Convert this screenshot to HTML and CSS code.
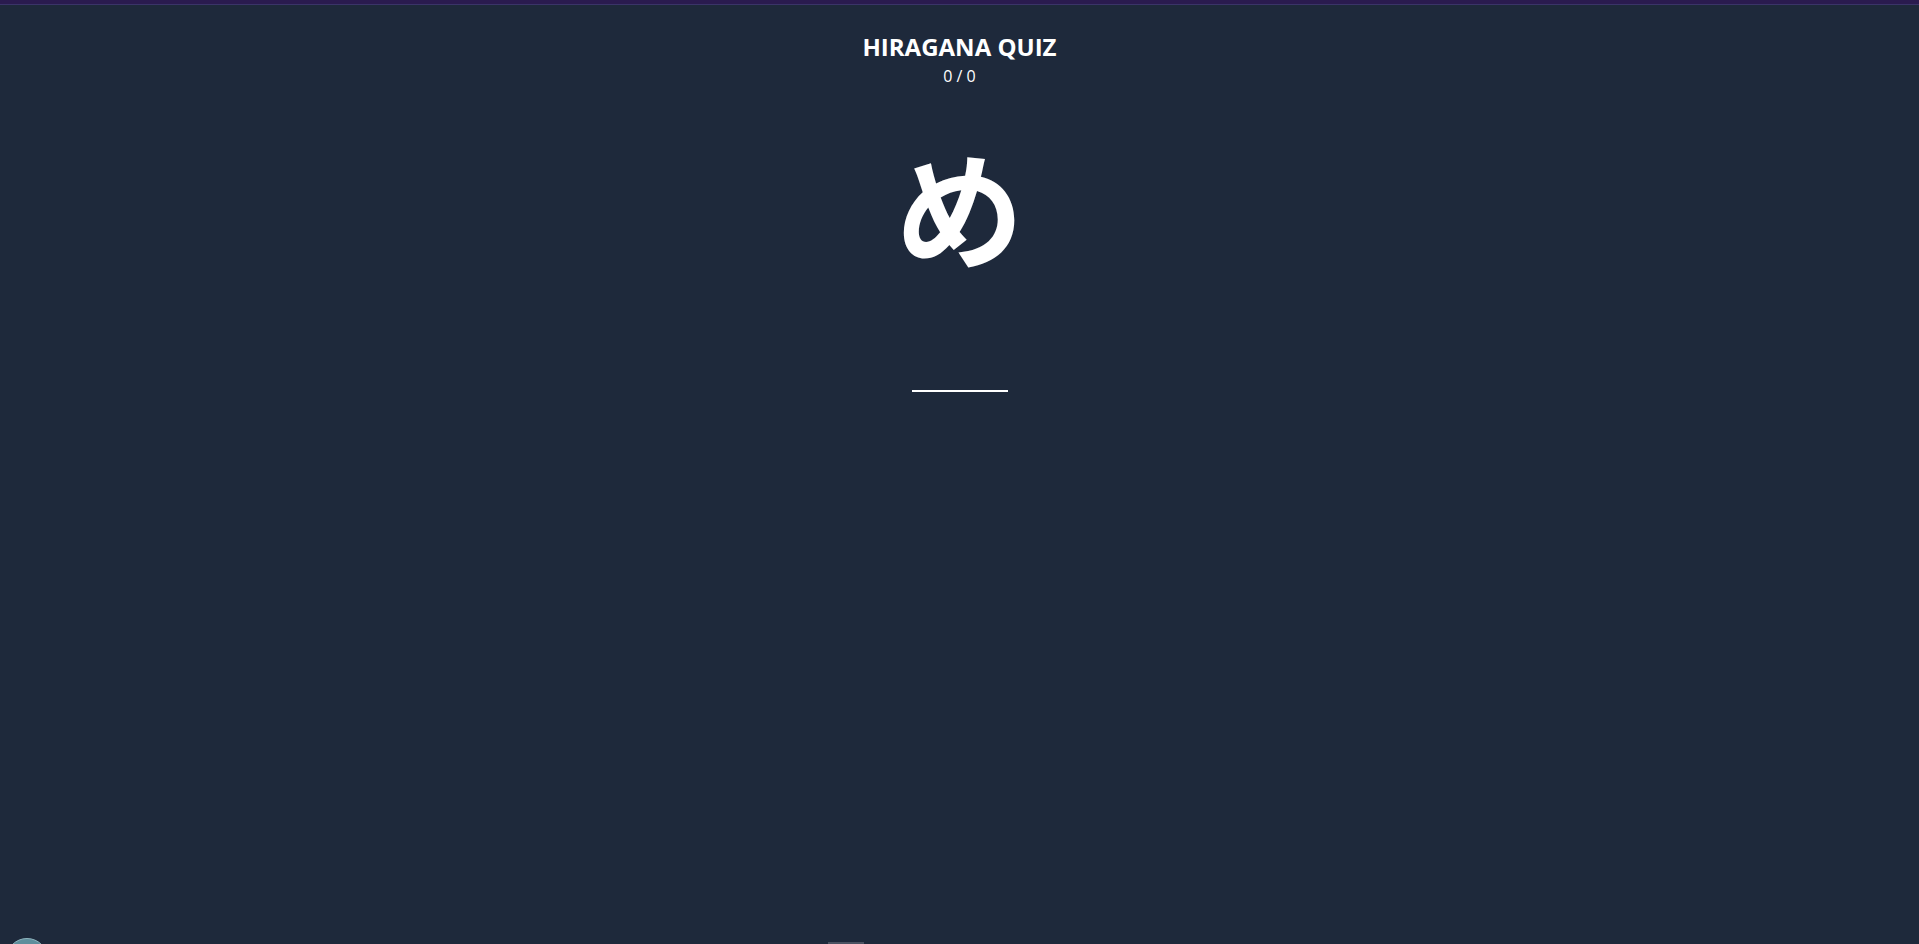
FILE: index.html
```html
<!DOCTYPE html>
<html lang="ja">
<head>
<meta charset="utf-8">
<title>Hiragana Quiz</title>
<link rel="stylesheet" href="styles.css">
</head>
<body>
<div class="topbar"></div>
<main class="quiz">
  <h1 class="title">HIRAGANA QUIZ</h1>
  <div class="score">0 / 0</div>
  <div class="kana">め</div>
  <input class="answer" type="text" aria-label="answer">
</main>
<div class="avatar"></div>
<div class="handle"></div>
</body>
</html>
```
FILE: styles.css
```css
html, body {
  margin: 0;
  padding: 0;
  height: 100%;
}
body {
  background: #1e293b;
  color: #ffffff;
  font-family: "Open Sans", "Noto Sans", sans-serif;
  overflow: hidden;
  position: relative;
}
.topbar {
  height: 4px;
  background: #2a1b4f;
  border-bottom: 1px solid #3a3468;
}
.quiz {
  display: flex;
  flex-direction: column;
  align-items: center;
  padding-top: 26px;
}
.title {
  margin: 0;
  font-size: 24px;
  font-weight: 700;
  line-height: 32px;
  letter-spacing: 0;
}
.score {
  font-size: 16px;
  line-height: 22px;
  margin-top: 2px;
}
.kana {
  font-family: "Noto Sans CJK JP", sans-serif;
  font-weight: 700;
  font-size: 128px;
  line-height: 1;
  margin-top: 54px;
}
.answer {
  margin-top: 97px;
  width: 96px;
  height: 24px;
  padding: 0;
  border: none;
  border-bottom: 2px solid #ffffff;
  background: transparent;
  color: #ffffff;
  outline: none;
  font-size: 18px;
  text-align: center;
}
.avatar {
  position: absolute;
  left: 6px;
  top: 938px;
  width: 40px;
  height: 40px;
  border-radius: 50%;
  background: #5e8e9c;
  border: 1px solid #8fb5bf;
}
.handle {
  position: absolute;
  left: 828px;
  top: 942px;
  width: 36px;
  height: 2px;
  background: #4b5262;
}
```
